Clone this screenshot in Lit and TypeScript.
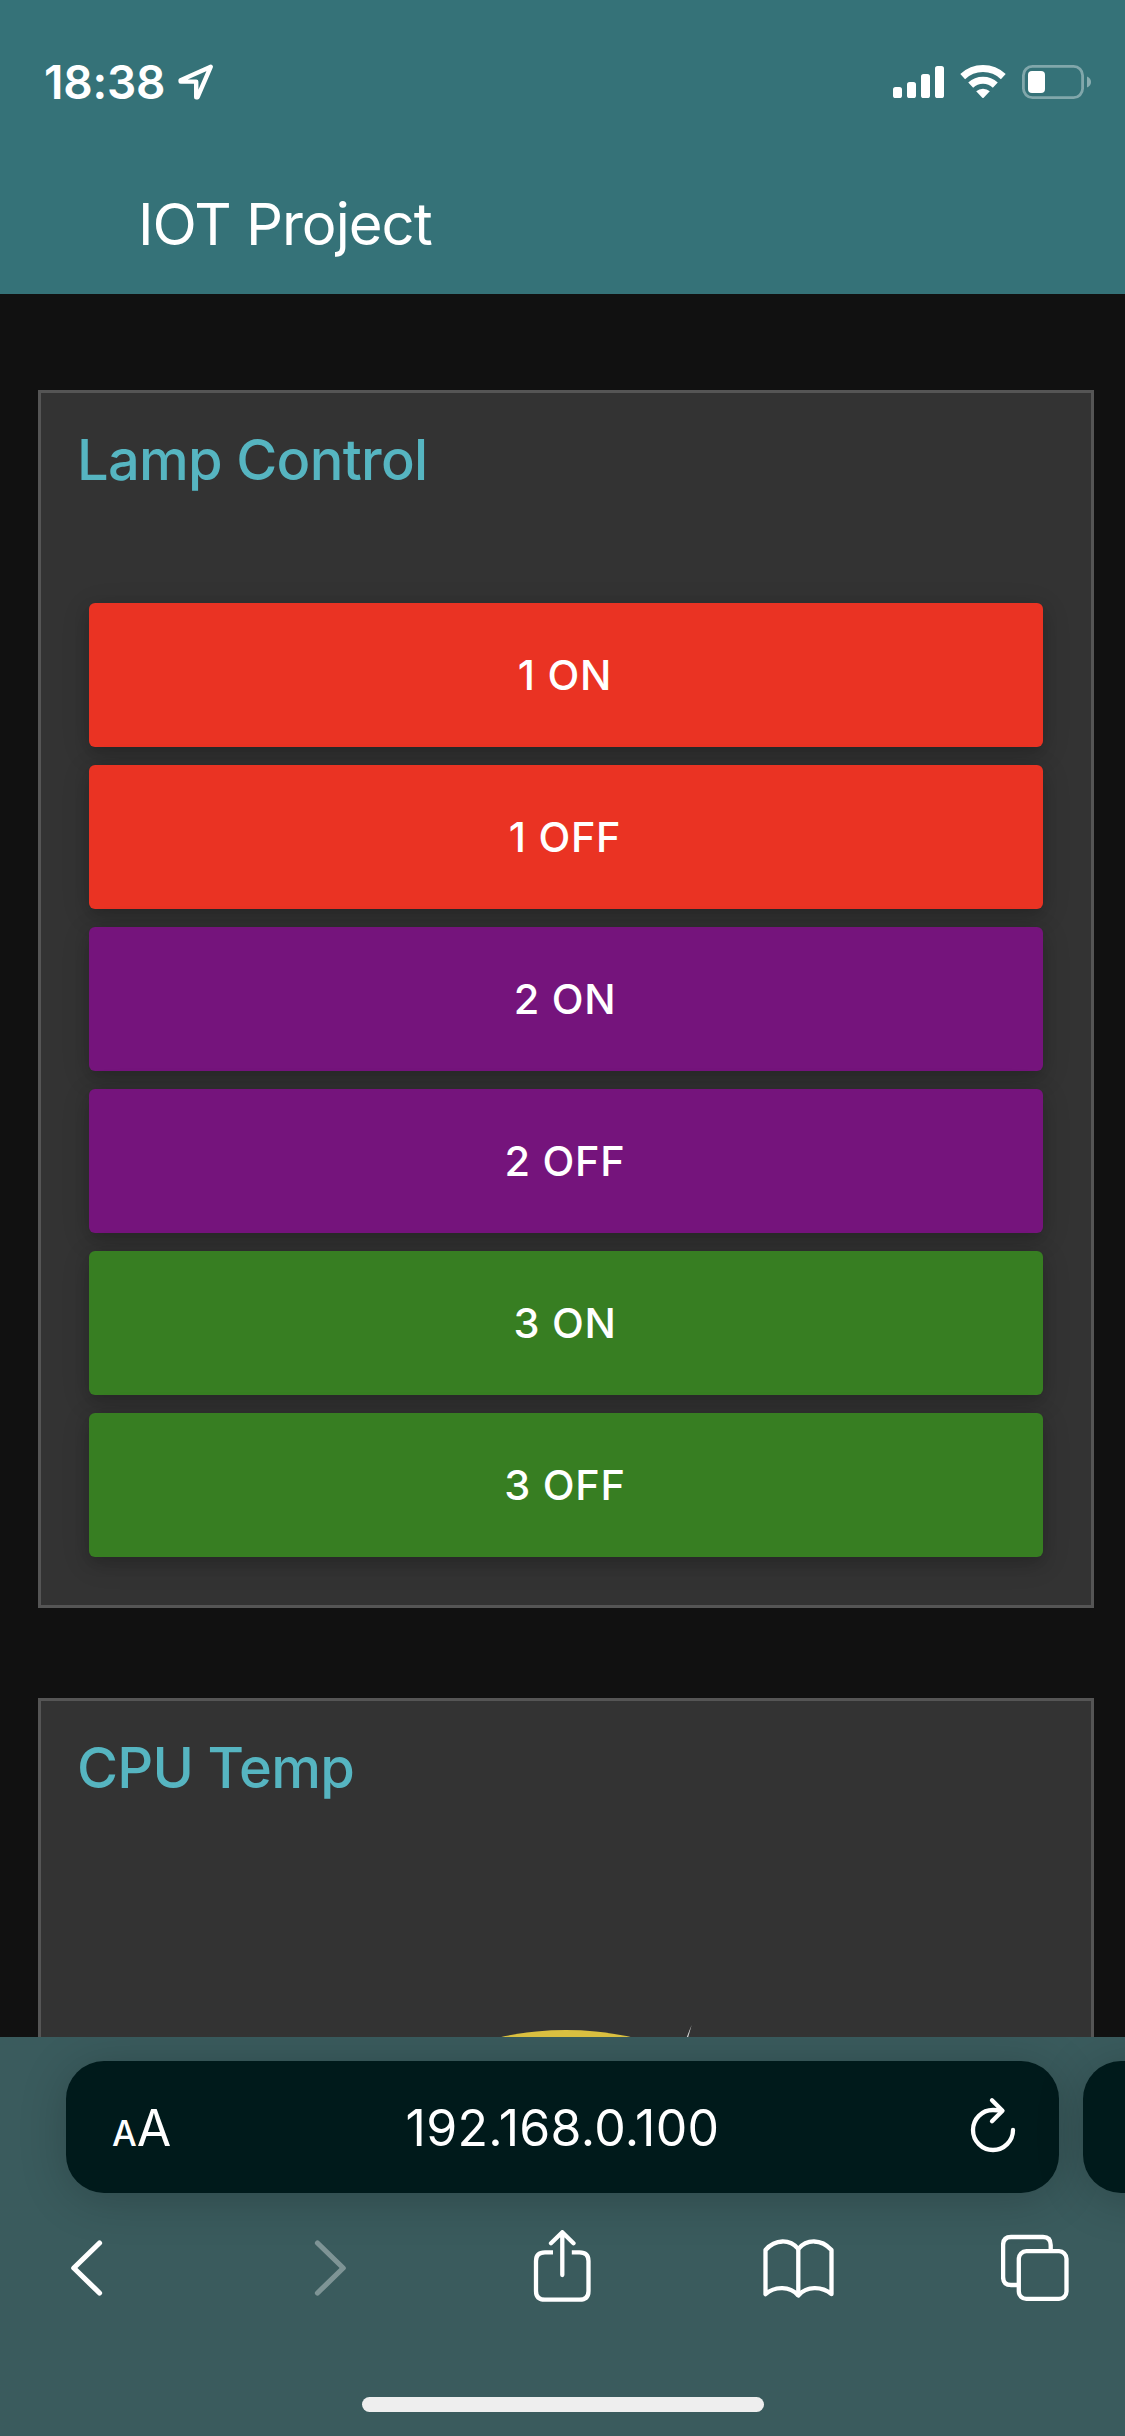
import { LitElement, html, css, svg } from "lit";
import { customElement, property } from "lit/decorators.js";
import { classMap } from "lit/directives/class-map.js";

type Tone = "red" | "purple" | "green";

interface LampAction {
  label: string;
  tone: Tone;
}

const LAMP_ACTIONS: LampAction[] = [
  { label: "1 ON", tone: "red" },
  { label: "1 OFF", tone: "red" },
  { label: "2 ON", tone: "purple" },
  { label: "2 OFF", tone: "purple" },
  { label: "3 ON", tone: "green" },
  { label: "3 OFF", tone: "green" },
];

@customElement("status-bar")
export class StatusBar extends LitElement {
  static styles = css`
    :host {
      display: flex;
      align-items: center;
      justify-content: space-between;
      box-sizing: border-box;
      height: 154px;
      padding: 10px 34px 0 44px;
      color: #fff;
    }
    .left,
    .right {
      display: flex;
      align-items: center;
    }
    .left {
      gap: 13px;
    }
    .time {
      font-size: 46px;
      font-weight: 600;
      line-height: 56px;
      letter-spacing: -0.2px;
    }
    .right {
      gap: 16px;
    }
    svg {
      display: block;
      fill: none;
    }
  `;

  render() {
    return html`
      <div class="left">
        <span class="time">18:38</span>
        <svg width="36" height="36" viewBox="0 0 36 36" stroke="#fff" stroke-width="4.4" stroke-linejoin="round">
          <path d="M32.8 2.7 2.6 16.2V17.6H18.2V33.2H19.6Z" />
        </svg>
      </div>
      <div class="right">
        <svg width="51" height="34" viewBox="0 0 51 34">
          <g fill="#fff">
            <rect x="0" y="22" width="9" height="11" rx="2.6" />
            <rect x="14" y="17" width="9" height="16" rx="2.6" />
            <rect x="28" y="9" width="9" height="24" rx="2.6" />
            <rect x="42" y="1" width="9" height="32" rx="2.6" />
          </g>
        </svg>
        <svg width="46" height="34" viewBox="0 0 46 34">
          <path d="M2.7 11.6a29.5 29.5 0 0 1 40.6 0" stroke="#fff" stroke-width="7" />
          <path d="M10.7 20.1a18 18 0 0 1 24.6 0" stroke="#fff" stroke-width="7.2" />
          <path d="M16.2 26.3a10 10 0 0 1 13.6 0L23.7 32.8q-.7.6-1.4 0Z" fill="#fff" />
        </svg>
        <svg width="69" height="34" viewBox="0 0 69 34">
          <rect x="1.4" y="1.4" width="59.2" height="31.2" rx="9" stroke="#fff" stroke-opacity=".38" stroke-width="2.8" />
          <rect x="6" y="6" width="17" height="22" rx="4" fill="#fff" />
          <path d="M65 11.5q4 1.6 4 5.5t-4 5.5z" fill="#fff" fill-opacity=".42" />
        </svg>
      </div>
    `;
  }
}

@customElement("lamp-button")
export class LampButton extends LitElement {
  @property() label = "";
  @property() tone: Tone = "red";

  static styles = css`
    :host {
      display: block;
    }
    .button {
      display: block;
      width: 100%;
      height: 144px;
      border: 0;
      border-radius: 6px;
      padding: 0 2px 0 0;
      color: #fff;
      font: inherit;
      font-size: 41.5px;
      font-weight: 450;
      letter-spacing: 0.7px;
      text-align: center;
      box-shadow: 0 6px 15px rgba(0, 0, 0, 0.16), 0 6px 30px rgba(0, 0, 0, 0.12);
    }
    .red {
      background: #ea3323;
    }
    .purple {
      background: #75147c;
    }
    .green {
      background: #377e22;
    }
  `;

  render() {
    return html`<button
      class=${classMap({
        button: true,
        red: this.tone === "red",
        purple: this.tone === "purple",
        green: this.tone === "green",
      })}
    >${this.label}</button>`;
  }
}

@customElement("panel-card")
export class PanelCard extends LitElement {
  @property() heading = "";

  static styles = css`
    :host {
      display: block;
      flex: none;
      box-sizing: border-box;
      border: 3px solid #555;
      background: #333;
    }
    .heading {
      margin: 0;
      padding: 0 36px;
      line-height: 134px;
      font-size: 56px;
      font-weight: 500;
      letter-spacing: -0.7px;
      color: #56b5c1;
    }
  `;

  render() {
    return html`
      <h2 class="heading">${this.heading}</h2>
      <slot></slot>
    `;
  }
}

@customElement("browser-bar")
export class BrowserBar extends LitElement {
  static styles = css`
    :host {
      display: flex;
      flex-direction: column;
      flex: none;
      box-sizing: border-box;
      height: 399px;
      padding-top: 24px;
      overflow: hidden;
      background: #3a5b5d;
      color: #fff;
    }
    .tabs {
      display: flex;
      gap: 24px;
      padding-left: 66px;
    }
    .pill {
      display: grid;
      grid-template-columns: 64px 1fr 68px;
      flex: none;
      align-items: center;
      box-sizing: border-box;
      width: 993px;
      height: 132px;
      padding: 0 42px 0 46px;
      border-radius: 38px;
      background: #001a1b;
      box-shadow: 0 6px 48px rgba(0, 0, 0, 0.2);
    }
    .text-size {
      white-space: nowrap;
      padding-top: 7px;
      line-height: 60px;
      font-size: 35px;
      font-weight: 500;
    }
    .big {
      font-size: 50px;
      font-weight: 400;
    }
    .address {
      padding-top: 2px;
      text-align: center;
      font-size: 50px;
      line-height: 60px;
      letter-spacing: 0.3px;
    }
    .reload {
      justify-self: end;
    }
    .tools {
      display: grid;
      grid-template-columns: 243px 220px 229px 240px 70px;
      align-items: center;
      justify-items: start;
      height: 150px;
      padding-left: 69px;
    }
    .home {
      align-self: center;
      width: 402px;
      height: 15px;
      margin-top: 54px;
      border-radius: 8px;
      background: #eee;
    }
    svg {
      display: block;
      fill: none;
      stroke: #fff;
      stroke-width: 4.3;
      stroke-linecap: round;
      stroke-linejoin: round;
    }
    .chevron {
      stroke-width: 5.2;
    }
    .dim {
      stroke-opacity: 0.35;
    }
  `;

  private book = svg`
    <path d="M765.500 2250C775.500 2238.600 790 2239 798.300 2249C806.600 2239 821.100 2238.600 831.500 2250V2294.200C821.600 2286 806.600 2286 798.300 2295.500C790 2286 775 2286 765.500 2294.200Z" />
    <path d="M798.300 2249V2295" />
  `;

  render() {
    return html`
      <div class="tabs">
        <div class="pill">
          <span class="text-size">A<span class="big">A</span></span>
          <span class="address">192.168.0.100</span>
          <svg class="reload" width="50" height="60" viewBox="967 2097 50 60">
            <path d="M1013 2130A20 20 0 1 1 993 2110Q998 2110 1001.500 2110.700" />
            <path d="M992 2100.300 1002.500 2110.700 992 2121.200" />
          </svg>
        </div>
        <div class="pill"></div>
      </div>
      <div class="tools">
        <svg class="chevron" width="36" height="60" viewBox="69 2238 36 60">
          <path d="M99.500 2243 73.800 2268 99.500 2293" />
        </svg>
        <svg class="chevron dim" width="36" height="60" viewBox="312 2238 36 60">
          <path d="M317.500 2243 343.200 2268 317.500 2293" />
        </svg>
        <svg width="60" height="76" viewBox="532 2230 60 76">
          <path d="M562.300 2233V2275M551 2243.200 562.300 2232.200 573.500 2243.200" />
          <path stroke-linecap="butt" d="M553 2252.400H545Q536 2252.400 536 2261V2291Q536 2299.700 545 2299.700H579.500Q588.500 2299.700 588.500 2291V2261Q588.500 2252.400 579.500 2252.400H571.800" />
        </svg>
        <svg width="74" height="64" viewBox="761 2236 74 64">${this.book}</svg>
        <svg width="70" height="68" viewBox="1001 2234 70 68">
          <path stroke-linecap="butt" d="M1018 2285H1011Q1003.100 2285 1003.100 2277V2245Q1003.100 2237 1011 2237H1043Q1050.700 2237 1050.700 2245V2250" />
          <rect x="1018.800" y="2251.200" width="47.700" height="47.700" rx="7.500" />
        </svg>
      </div>
      <div class="home"></div>
    `;
  }
}

@customElement("app-root")
export class AppRoot extends LitElement {
  static styles = css`
    :host {
      display: flex;
      flex-direction: column;
      width: 1125px;
      height: 2436px;
      overflow: hidden;
      background: #111;
      font-family: Inter, "Liberation Sans", sans-serif;
    }
    .header {
      flex: none;
      height: 294px;
      background: #357278;
      color: #fff;
    }
    .title {
      margin: 0;
      padding-left: 138px;
      line-height: 140px;
      font-size: 58px;
      font-weight: 400;
      letter-spacing: -1px;
    }
    .content {
      display: flex;
      flex: 1;
      flex-direction: column;
      gap: 90px;
      min-height: 0;
      padding: 96px 31px 0 38px;
      overflow: hidden;
    }
    .lamps {
      display: flex;
      flex-direction: column;
      gap: 18px;
      padding: 76px 48px 48px;
    }
    .gauge {
      display: block;
      margin: 165px auto 0;
    }
  `;

  render() {
    return html`
      <header class="header">
        <status-bar></status-bar>
        <h1 class="title">IOT Project</h1>
      </header>
      <main class="content">
        <panel-card heading="Lamp Control">
          <div class="lamps">
            ${LAMP_ACTIONS.map(
              (a) => html`<lamp-button .label=${a.label} .tone=${a.tone}></lamp-button>`
            )}
          </div>
        </panel-card>
        <panel-card heading="CPU Temp">
          <svg class="gauge" width="640" height="640" viewBox="0 0 640 640">
            <circle cx="320" cy="332" r="302" fill="#d9bf40" />
            <path d="M445.600 25 440.200 38.500H441.800Z" fill="#d8d8d8" />
          </svg>
        </panel-card>
      </main>
      <browser-bar></browser-bar>
    `;
  }
}
